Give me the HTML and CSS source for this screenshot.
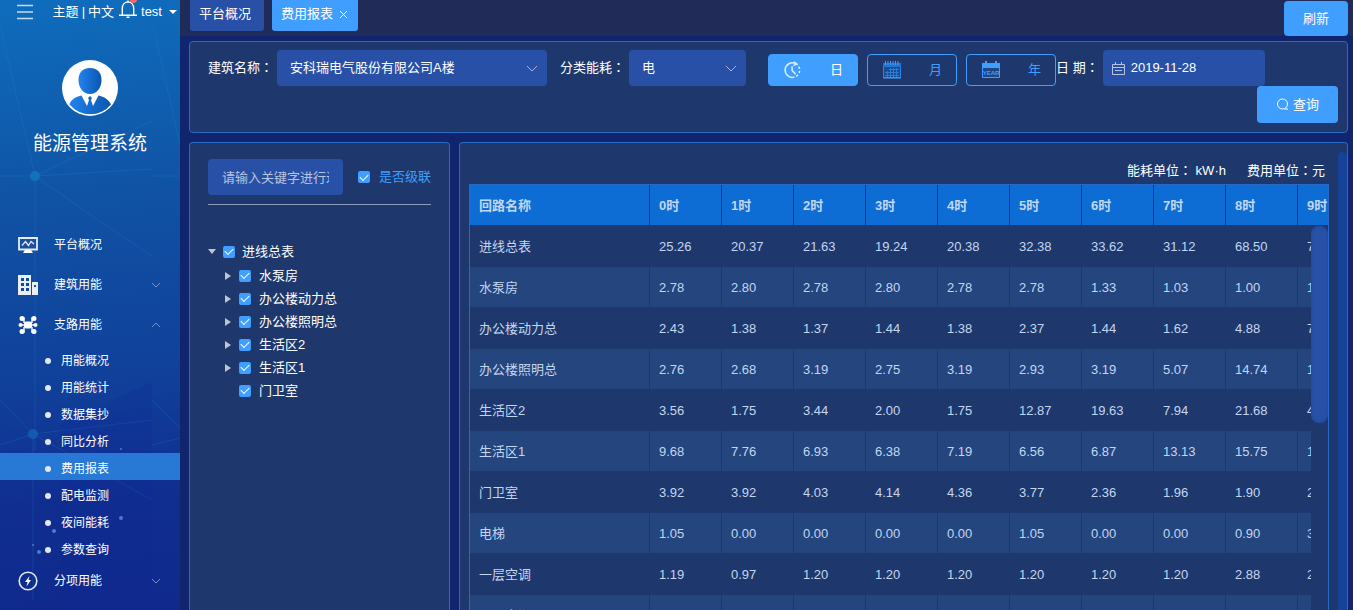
FILE: index.html
```html
<!DOCTYPE html>
<html lang="zh-CN">
<head>
    <meta charset="UTF-8">
    <meta name="viewport" content="width=device-width, initial-scale=1.0">
    <title>能源管理系统</title>
    <link rel="stylesheet" href="styles.css">
</head>
<body>
    <aside class="sidebar">
        <svg class="sidebar-bg" viewBox="0 0 180 610" preserveAspectRatio="none" aria-hidden="true">
            <g stroke="#2a9ad8" stroke-opacity=".18" fill="none">
                <path d="M0 25L35 176L152 121M0 176H35L152 169M35 176L98 220L152 256M35 176V450M153 25L180 145M152 176H180"/>
                <path d="M0 400L33 434L152 420M33 434L0 445M33 434V600M33 434L152 500M152 400L180 428M152 445L180 438"/>
            </g>
            <path d="M60 425L152 382V610H60z" fill="#102a94" fill-opacity=".2"/>
            <circle cx="35" cy="176" r="5" fill="#1272b8"/>
            <circle cx="33" cy="434" r="5" fill="#1459b0"/>
            <g fill="#4b7cc8"><circle cx="121" cy="449" r="1"/><circle cx="121" cy="518" r="2"/><circle cx="54" cy="531" r="2"/><circle cx="39" cy="552" r="2"/><circle cx="33" cy="545" r="1"/></g>
        </svg>
        <div class="userbar">
            <button class="icon-btn" aria-label="菜单">
                <svg width="18" height="16" viewBox="0 0 18 16" stroke="#c5dcf2" stroke-width="1.3"><path d="M1 1.5h16M1 8h16M1 14.5h16"/></svg>
            </button>
            <div class="userbar-links">
                <a href="#">主题</a><span class="split">|</span><a href="#">中文</a>
                <button class="icon-btn bell" aria-label="消息">
                    <svg width="18" height="18" viewBox="0 0 18 18" fill="none" stroke="#fff" stroke-width="1.4"><path d="M0 15.300h18M3.300 15V8.500C3.300 4.200 6 2 9 2s5.700 2.200 5.700 6.500V15M9 2V.5M7.500 17.300h3"/></svg>
                    <span class="dot"></span>
                </button>
                <button class="icon-btn user">test<span class="caret"></span></button>
            </div>
        </div>

        <svg class="avatar" width="58" height="58" viewBox="0 0 58 58">
            <defs>
                <linearGradient id="blue"><stop offset="0" stop-color="#2283ee"/><stop offset="1" stop-color="#0a56ae"/></linearGradient>
            </defs>
            <circle cx="29" cy="29" r="28" fill="#fff"/>
            <path d="M29 9c8 0 11.500 5 11.500 12 0 8-5 14-11.500 14s-11.500-6-11.500-14C17.500 14 21 9 29 9z" fill="url(#blue)"/>
            <path d="M8.500 45.500C10 40 15 38 20.500 36.500L26 47l2-6-1-2 2-2 2 2-1 2 2 6 5.500-10.500C43 38 47.500 40 50 45.500A27 27 0 0 1 8.500 45.500z" fill="url(#blue)"/>
        </svg>
        <h1 class="system-name">能源管理系统</h1>

        <nav class="menu">
            <a class="menu-item" href="#">
                <svg width="20" height="20" viewBox="0 0 20 20"><path d="M1 3h18v11.500H1z" fill="#1d4f9c" stroke="#e3ecf8" stroke-width="1.800"/><path d="M4 10.500l3.500-4 3 4 2.500-4 3 2.500" fill="none" stroke="#e3ecf8" stroke-width="1.300"/><path d="M7 15h6l2 3H5z" fill="#fff"/></svg>
                <span>平台概况</span>
            </a>
            <a class="menu-item" href="#">
                <svg width="20" height="20" viewBox="0 0 20 20"><path fill="#e8eff9" fill-rule="evenodd" d="M0 0h13v20H0zM3 3v3h3V3zM8 3v3h3V3zM3 8v3h3V8zM8 8v3h3V8zM3 13v3h3v-3zM8 13v3h3v-3zM14 7h6v13h-6zM16 10v2h2v-2z"/></svg>
                <span>建筑用能</span>
                <svg class="arrow" width="10" height="6" viewBox="0 0 10 6"><path d="M1 1l4 4 4-4"/></svg>
            </a>
            <a class="menu-item" href="#">
                <svg width="20" height="20" viewBox="0 0 20 20"><g stroke="#eef4fc" stroke-width="1.500" fill="none"><path d="M3 3h3v5M17 3h-3v5M3 17h3v-5M17 17h-3v-5M3 10h14"/></g><g fill="#fff"><rect x="6" y="6.500" width="8" height="7" rx="2"/><circle cx="4" cy="3.500" r="2.500"/><circle cx="16" cy="3.500" r="2.500"/><circle cx="2.500" cy="10" r="2"/><circle cx="17.500" cy="10" r="2"/><circle cx="4" cy="16.500" r="2.500"/><circle cx="16" cy="16.500" r="2.500"/></g></svg>
                <span>支路用能</span>
                <svg class="arrow" width="10" height="6" viewBox="0 0 10 6"><path d="M1 5l4-4 4 4"/></svg>
            </a>
            <div class="submenu">
                <a href="#">用能概况</a>
                <a href="#">用能统计</a>
                <a href="#">数据集抄</a>
                <a href="#">同比分析</a>
                <a href="#" class="active">费用报表</a>
                <a href="#">配电监测</a>
                <a href="#">夜间能耗</a>
                <a href="#">参数查询</a>
            </div>
            <a class="menu-item" href="#">
                <svg width="20" height="20" viewBox="0 0 20 20"><circle cx="10" cy="10" r="8.800" fill="none" stroke="#e3eaf8" stroke-width="1.600"/><path d="M11.500 5L7 11h2.500L8.500 15.500 13 9h-2.500z" fill="#fff"/></svg>
                <span>分项用能</span>
                <svg class="arrow" width="10" height="6" viewBox="0 0 10 6"><path d="M1 1l4 4 4-4"/></svg>
            </a>
        </nav>
    </aside>

    <div class="page">
        <header class="tabs">
            <a class="tab" href="#">平台概况</a>
            <a class="tab active" href="#">费用报表
                <svg width="9" height="9" viewBox="0 0 9 9" stroke="#fff"><path d="M1 1l7 7M8 1L1 8"/></svg>
            </a>
            <button class="btn refresh">刷新</button>
        </header>

        <main class="content">
            <form class="panel filter">
                <div class="filter-row">
                    <label for="building">建筑名称<span class="colon" lang="zh-TW">：</span></label>
                    <span class="select building">
                        <select id="building"><option>安科瑞电气股份有限公司A楼</option></select>
                        <svg width="12" height="7" viewBox="0 0 12 7"><path d="M1 1l5 5 5-5"/></svg>
                    </span>
                    <label for="energy">分类能耗<span class="colon" lang="zh-TW">：</span></label>
                    <span class="select energy">
                        <select id="energy"><option>电</option></select>
                        <svg width="12" height="7" viewBox="0 0 12 7"><path d="M1 1l5 5 5-5"/></svg>
                    </span>
                    <div class="period">
                        <button type="button" class="period-btn active">
                            <svg width="20" height="20" viewBox="-1 -1 22 22" fill="none" stroke="#d9ebff" stroke-width="1.700"><path d="M11.500 17.800A8 8 0 1 1 13 3"/><path d="M13 3A8 8 0 0 1 11.500 17.800" stroke-dasharray="2.500 2.200"/><path d="M11 1l3 2.200-3.500 2M9 6v4.500l4 4"/></svg>
                            日
                        </button>
                        <button type="button" class="period-btn">
                            <svg width="20" height="20" viewBox="0 0 20 20"><path d="M1.500 3.500h17v14h-17z" fill="#1c4c8d" stroke="#2b86e3"/><path d="M1 3h18v4H1z" fill="#2474cf"/><path d="M3.500 1v4M6 1v4M8.500 1v4M11 1v4M13.500 1v4M16 1v4" stroke="#409eff"/><path d="M7 9.500h10M3 12.500h14M3 15.500h14M5.500 11v6M8.500 8v9M11.500 8v9M14.500 8v9" stroke="#2b7bd2"/><path d="M1 18h18" stroke="#409eff"/></svg>
                            月
                        </button>
                        <button type="button" class="period-btn">
                            <svg width="20" height="20" viewBox="0 0 20 20"><path d="M1.500 3.500h17v14h-17z" fill="#1c4684" stroke="#409eff"/><path d="M1 3h18v5H1z" fill="#409eff"/><path d="M5 1v3M15 1v3" stroke="#409eff" stroke-width="2"/><text x="10" y="14.500" text-anchor="middle" class="year-text">YEAR</text></svg>
                            年
                        </button>
                    </div>
                    <label for="date">日 期<span class="colon" lang="zh-TW">：</span></label>
                    <span class="date">
                        <svg width="13" height="13" viewBox="0 0 13 13" fill="none" stroke="#b9c4df"><path d="M.5 2.500h12v10H.5zM.5 5.500h12M3.500 0v3M9.500 0v3M3 8.500h7"/></svg>
                        <input id="date" type="text" value="2019-11-28">
                    </span>
                </div>
                <div class="filter-actions">
                    <button type="button" class="btn query">
                        <svg width="13" height="13" viewBox="0 0 13 13" fill="none" stroke="#fff"><circle cx="6.500" cy="6" r="5"/><path d="M8.500 11h3.500"/></svg>
                        查询
                    </button>
                </div>
            </form>

            <div class="columns">
                <section class="panel tree-panel">
                    <div class="search-row">
                        <input class="search" type="text" placeholder="请输入关键字进行过滤" aria-label="关键字">
                        <label class="cascade"><input type="checkbox" checked>是否级联</label>
                    </div>
                    <ul class="tree">
                        <li><span class="toggle open"></span><label><input type="checkbox" checked>进线总表</label>
                            <ul>
                                <li><span class="toggle"></span><label><input type="checkbox" checked>水泵房</label></li>
                                <li><span class="toggle"></span><label><input type="checkbox" checked>办公楼动力总</label></li>
                                <li><span class="toggle"></span><label><input type="checkbox" checked>办公楼照明总</label></li>
                                <li><span class="toggle"></span><label><input type="checkbox" checked>生活区2</label></li>
                                <li><span class="toggle"></span><label><input type="checkbox" checked>生活区1</label></li>
                                <li><span class="toggle leaf"></span><label><input type="checkbox" checked>门卫室</label></li>
                            </ul>
                        </li>
                    </ul>
                </section>

                <section class="panel report">
                    <div class="units"><span>能耗单位<span class="colon" lang="zh-TW">：</span> kW·h</span><span>费用单位<span class="colon" lang="zh-TW">：</span>元</span></div>
                    <div class="table-wrap">
                        <table>
                            <thead>
                                <tr><th class="name">回路名称</th><th>0时</th><th>1时</th><th>2时</th><th>3时</th><th>4时</th><th>5时</th><th>6时</th><th>7时</th><th>8时</th><th>9时</th></tr>
                            </thead>
                            <tbody>
                                <tr><td>进线总表</td><td>25.26</td><td>20.37</td><td>21.63</td><td>19.24</td><td>20.38</td><td>32.38</td><td>33.62</td><td>31.12</td><td>68.50</td><td>7</td></tr>
                                <tr><td>水泵房</td><td>2.78</td><td>2.80</td><td>2.78</td><td>2.80</td><td>2.78</td><td>2.78</td><td>1.33</td><td>1.03</td><td>1.00</td><td>1</td></tr>
                                <tr><td>办公楼动力总</td><td>2.43</td><td>1.38</td><td>1.37</td><td>1.44</td><td>1.38</td><td>2.37</td><td>1.44</td><td>1.62</td><td>4.88</td><td>7</td></tr>
                                <tr><td>办公楼照明总</td><td>2.76</td><td>2.68</td><td>3.19</td><td>2.75</td><td>3.19</td><td>2.93</td><td>3.19</td><td>5.07</td><td>14.74</td><td>1</td></tr>
                                <tr><td>生活区2</td><td>3.56</td><td>1.75</td><td>3.44</td><td>2.00</td><td>1.75</td><td>12.87</td><td>19.63</td><td>7.94</td><td>21.68</td><td>4</td></tr>
                                <tr><td>生活区1</td><td>9.68</td><td>7.76</td><td>6.93</td><td>6.38</td><td>7.19</td><td>6.56</td><td>6.87</td><td>13.13</td><td>15.75</td><td>1</td></tr>
                                <tr><td>门卫室</td><td>3.92</td><td>3.92</td><td>4.03</td><td>4.14</td><td>4.36</td><td>3.77</td><td>2.36</td><td>1.96</td><td>1.90</td><td>2</td></tr>
                                <tr><td>电梯</td><td>1.05</td><td>0.00</td><td>0.00</td><td>0.00</td><td>0.00</td><td>1.05</td><td>0.00</td><td>0.00</td><td>0.90</td><td>3</td></tr>
                                <tr><td>一层空调</td><td>1.19</td><td>0.97</td><td>1.20</td><td>1.20</td><td>1.20</td><td>1.20</td><td>1.20</td><td>1.20</td><td>2.88</td><td>2</td></tr>
                                <tr><td>二层空调</td><td></td><td></td><td></td><td></td><td></td><td></td><td></td><td></td><td></td><td></td></tr>
                            </tbody>
                        </table>
                        <div class="scrollbar"><div class="thumb"></div></div>
                    </div>
                    <div class="panel-scroll"></div>
                </section>
            </div>
        </main>
    </div>
</body>
</html>
```

FILE: styles.css
```css
* {
    box-sizing: border-box;
}
body {
    margin: 0;
    height: 100vh;
    display: flex;
    overflow: hidden;
    background: #10256d;
    color: #fff;
    font-family: "Liberation Sans", "Noto Sans CJK SC", sans-serif;
    font-size: 13px;
    line-height: 20px;
}
a {
    color: inherit;
    text-decoration: none;
}
button, input, select {
    font: inherit;
    color: inherit;
}
button {
    cursor: pointer;
}
/* colon centred in its cell */
.colon {
    font-family: "Noto Sans CJK TC", sans-serif;
    line-height: 1;
}

/* sidebar */
.sidebar {
    position: relative;
    flex: 0 0 180px;
    overflow: hidden;
    background: linear-gradient(175deg, #0f6dbd 0%, #1053a5 32%, #10409a 62%, #102d90 82%, #0f2a8c 100%);
}
.sidebar-bg {
    position: absolute;
    inset: 0;
    width: 100%;
    height: 100%;
}
.sidebar > :not(.sidebar-bg) {
    position: relative;
}
.userbar {
    display: flex;
    justify-content: space-between;
    align-items: center;
    height: 24px;
    padding: 0 3px 0 16px;
}
.userbar-links {
    display: flex;
    align-items: center;
}
.split {
    padding: 0 3px;
}
.icon-btn {
    display: flex;
    align-items: center;
    padding: 0;
    border: none;
    background: none;
}
.bell {
    position: relative;
    margin: 0 4px 6px 5px;
}
.dot {
    position: absolute;
    top: -4px;
    right: 0;
    width: 7px;
    height: 7px;
    border-radius: 50%;
    background: #f56c6c;
}
.caret {
    margin-left: 7px;
    border: 4px solid transparent;
    border-top-color: #fff;
    border-bottom: none;
}
.avatar {
    display: block;
    margin: 35px auto 0;
}
.system-name {
    margin: 13px 0 0;
    font-size: 19px;
    font-weight: normal;
    line-height: 28px;
    text-align: center;
}
.menu {
    margin-top: 67px;
    font-size: 12px;
}
.menu-item {
    display: flex;
    align-items: center;
    gap: 16px;
    height: 40px;
    padding: 0 19px 0 18px;
}
.arrow {
    margin-left: auto;
    fill: none;
    stroke: #7d90bf;
}
.submenu a {
    display: flex;
    align-items: center;
    gap: 10px;
    height: 27px;
    padding: 5px 0 0 45px;
}
.submenu a::before {
    content: "";
    width: 6px;
    height: 6px;
    border-radius: 50%;
    background: #e4e8ee;
}
.submenu .active {
    background: #2878d6;
}

/* top tabs */
.page {
    flex: 1;
    min-width: 0;
    display: flex;
    flex-direction: column;
}
.tabs {
    display: flex;
    align-items: flex-start;
    gap: 8px;
    height: 36px;
    padding: 0 5px 0 10px;
    background: #202c57;
}
.tab {
    display: flex;
    align-items: center;
    gap: 6px;
    height: 31px;
    padding: 0 13px 3px 9px;
    border-radius: 0 0 3px 3px;
    background: #2850a7;
}
.tab.active {
    padding-right: 10px;
}
.tab.active, .btn {
    background: #409eff;
}
.btn {
    display: flex;
    align-items: center;
    justify-content: center;
    gap: 4px;
    border: none;
    border-radius: 4px;
}
.refresh {
    width: 64px;
    height: 35px;
    margin: 1px 0 0 auto;
}

/* filter */
.content {
    flex: 1;
    min-height: 0;
    display: flex;
    flex-direction: column;
    gap: 9px;
    padding: 5px 5px 0 9px;
}
.panel {
    border: 1px solid #266ac5;
    border-radius: 4px;
    background: #1e386d;
}
.filter {
    padding: 8px 9px 9px 18px;
}
.filter-row {
    display: flex;
    align-items: center;
}
.select {
    display: grid;
    align-items: center;
    margin: 0 13px 0 4px;
}
.building {
    width: 270px;
}
.energy {
    width: 117px;
    margin-right: 22px;
}
.select select, .select svg {
    grid-area: 1 / 1;
}
.select svg {
    justify-self: end;
    margin-right: 9px;
    fill: none;
    stroke: #a9b6d8;
    pointer-events: none;
}
.select select, .date, .search {
    height: 36px;
    border: none;
    border-radius: 4px;
    background: #2850a7;
}
.select select {
    width: 100%;
    padding: 0 13px;
    appearance: none;
}
.period {
    display: flex;
    gap: 9px;
    padding-top: 4px;
}
.period-btn {
    display: flex;
    align-items: center;
    justify-content: space-between;
    width: 90px;
    height: 32px;
    padding: 0 14px;
    border: 1px solid #409eff;
    border-radius: 4px;
    background: none;
    color: #409eff;
}
.period-btn.active {
    background: #409eff;
    color: #fff;
}
.year-text {
    font-size: 6px;
    font-weight: bold;
    fill: #409eff;
}
.date {
    display: flex;
    align-items: center;
    gap: 6px;
    width: 162px;
    margin-left: 4px;
    padding: 0 9px;
}
.date input {
    flex: 1;
    min-width: 0;
    padding: 0;
    border: none;
    background: none;
}
.filter-actions {
    display: flex;
    justify-content: flex-end;
}
.query {
    width: 81px;
    height: 37px;
}

/* tree */
.columns {
    flex: 1;
    min-height: 0;
    display: flex;
    gap: 9px;
}
.tree-panel {
    flex: 0 0 261px;
    padding: 16px 18px;
    border-bottom: none;
    border-radius: 4px 4px 0 0;
}
.search-row {
    display: flex;
    align-items: center;
    justify-content: space-between;
    padding-bottom: 9px;
    border-bottom: 1px solid #8c9cb8;
}
.search {
    width: 135px;
    padding: 0 14px;
}
.search::placeholder {
    color: #b9c4df;
}
.cascade {
    color: #409eff;
}
.tree-panel label {
    display: flex;
    align-items: center;
    gap: 7px;
}
.tree-panel .cascade {
    gap: 9px;
}
input[type="checkbox"] {
    display: grid;
    place-items: center;
    width: 12px;
    height: 12px;
    margin: 0;
    border-radius: 2px;
    background: #409eff;
    appearance: none;
}
input[type="checkbox"]::before {
    content: "";
    width: 7px;
    height: 4px;
    margin-bottom: 2px;
    border: solid #fff;
    border-width: 0 0 1px 1px;
    transform: rotate(-45deg);
}
.tree, .tree ul {
    margin: 0;
    padding: 0;
    list-style: none;
}
.tree {
    margin-top: 35px;
}
.tree li {
    display: grid;
    grid-template-columns: 15px 1fr;
    align-items: center;
    line-height: 23px;
}
.tree ul {
    grid-column: 1 / -1;
    padding: 1px 0 0 16px;
}
.tree ul label {
    gap: 8px;
}
.toggle {
    width: 0;
    border: 4px solid transparent;
    border-left: 6px solid #c0c4cc;
    border-right: none;
}
.toggle.open {
    border: 4px solid transparent;
    border-top: 5px solid #c0c4cc;
    border-bottom: none;
}
.tree ul .toggle {
    margin-left: 1px;
}
.toggle.leaf {
    visibility: hidden;
}

/* report table */
.report {
    position: relative;
    flex: 1;
    min-width: 0;
    display: flex;
    flex-direction: column;
    padding: 18px 18px 0 9px;
    border-bottom: none;
    border-radius: 4px 4px 0 0;
}
.units {
    display: flex;
    justify-content: flex-end;
    gap: 21px;
    height: 23px;
    padding-right: 4px;
}
.table-wrap {
    position: relative;
    flex: 1;
    min-height: 0;
    overflow: hidden;
    border: 1px solid #266ac5;
    border-bottom: none;
}
table {
    width: 900px;
    table-layout: fixed;
    border-collapse: separate;
    border-spacing: 0;
    color: #c3d6f0;
}
th, td {
    height: 41px;
    padding: 1px 9px 0;
    border-right: 1px solid #1e386d;
    border-bottom: 1px solid #1e386d;
    text-align: left;
    white-space: nowrap;
}
th {
    background: #0d6dd4;
}
.name {
    width: 180px;
}
tbody tr:nth-child(even) td {
    background: #24457e;
}
.scrollbar {
    position: absolute;
    top: 41px;
    right: 0;
    bottom: 0;
    width: 17px;
    background: #1e386d;
}
.thumb {
    height: 197px;
    border-radius: 8px;
    background: #2850a7;
    box-shadow: inset 0 0 3px #1f4492;
}
.panel-scroll {
    position: absolute;
    top: 9px;
    right: 0;
    bottom: 0;
    width: 9px;
    border-radius: 5px 5px 0 0;
    background: #17429a;
}
```
